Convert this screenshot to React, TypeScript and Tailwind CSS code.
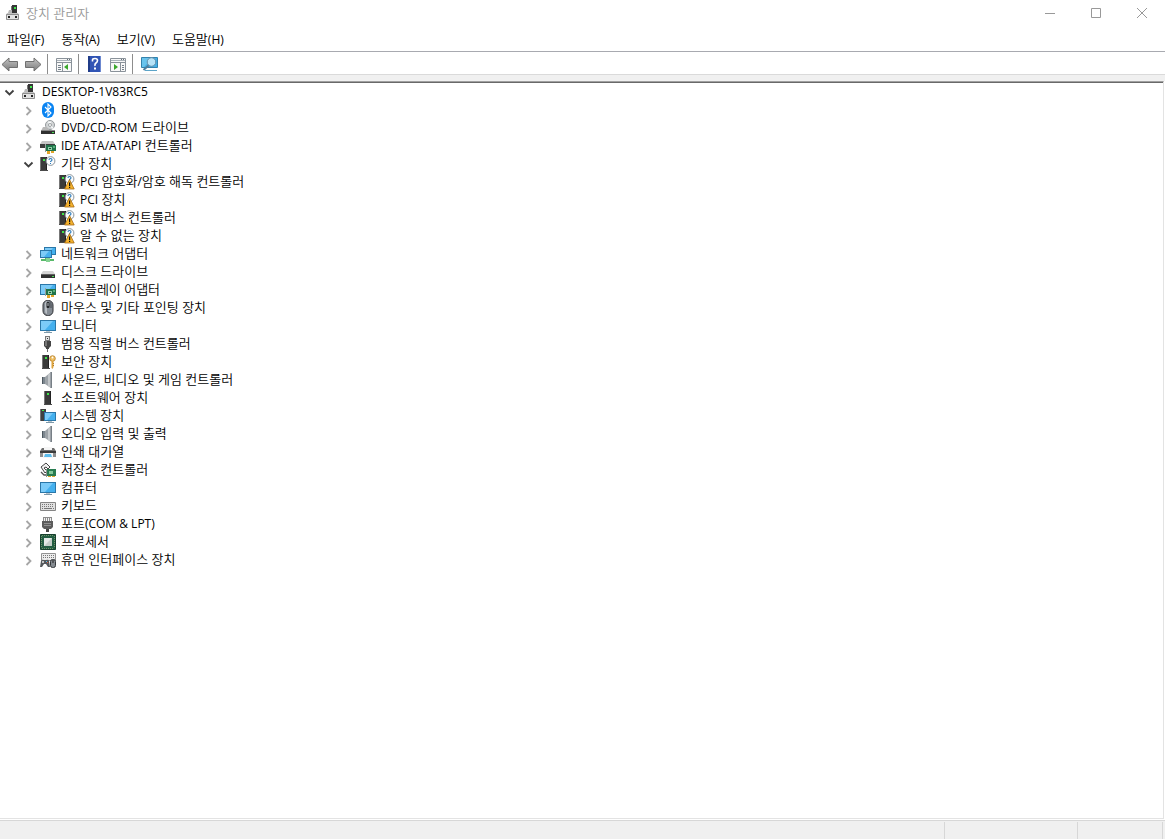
import { useState } from "react";
import type { ReactNode } from "react";

function Svg({ children }: { children: ReactNode }) {
  return (
    <svg viewBox="0 0 16 16" className="size-4 shrink-0" aria-hidden="true">
      {children}
    </svg>
  );
}

function Tower({ x = 0 }: { x?: number }) {
  return (
    <g transform={`translate(${x} 0)`}>
      <path d="M0 1h7v13H0z" fill="#3a3a3a" />
      <path d="M0 1h1v13H0z" fill="#777" />
      <path d="M6 1h1v13H6z" fill="#222" />
      <path d="M0 14h8v1H0z" fill="#4a4a4a" />
      <path d="M3 3h2v2H3z" fill="#3ee64a" />
    </g>
  );
}

function Screen({ x, y, w, h }: { x: number; y: number; w: number; h: number }) {
  return (
    <g>
      <rect x={x + 0.5} y={y + 0.5} width={w - 1} height={h - 1} fill="#45b0ee" stroke="#2b77a8" />
      <path d={`M${x + 1} ${y + 1}h${w - 4}l-${h - 3} ${h - 2}h-${w - h - 1}z`} fill="#7ccbf8" />
    </g>
  );
}

function Board() {
  return (
    <g>
      <path d="M5 6h1v8H5z" fill="#9aa09d" />
      <path d="M6 7h10v6H6z" fill="#20734a" />
      <path d="M8 9h4v3H8z" fill="#8fd0a8" />
      <path d="M9 10h2v1H9z" fill="#1d4d35" />
      <path d="M13 8h2v2h-2z" fill="#58b07c" />
      <path d="M7 13h3v3H7zM11 13h3v2h-3z" fill="#e2a52a" />
    </g>
  );
}

function Question({ cx, cy, r }: { cx: number; cy: number; r: number }) {
  return (
    <g>
      <circle cx={cx} cy={cy} r={r} fill="#fbfcfd" stroke="#7f8a92" strokeWidth="0.9" />
      <path
        d={`M${cx - 1.5} ${cy - 1}q0-1.500 1.500-1.500t1.500 1.300q0 .8-.8 1.200t-.7 1`}
        fill="none"
        stroke="#2879b9"
        strokeWidth="1.1"
      />
      <path d={`M${cx - 0.5} ${cy + 2}h1v1h-1z`} fill="#2879b9" />
    </g>
  );
}

const speaker = (
  <>
    <path d="M2 5h4v7H2z" fill="#7c868e" />
    <path d="M2 5h1v7H2z" fill="#4e5860" />
    <path d="M5 5l6-5v16l-6-4z" fill="#9da3a8" />
    <path d="M8 2.500L11 0v16l-3-2z" fill="#c3c7ca" />
    <path d="M10.500 0h1.500v16h-1.500z" fill="#777f86" />
  </>
);

const monitor = (
  <>
    <Screen x={0} y={2} w={16} h={11} />
    <path d="M6 13h4v1H6z" fill="#b8c4cc" />
    <path d="M4 14h8v1H4z" fill="#7e99aa" />
  </>
);

const icons: Record<string, ReactNode> = {
  root: (
    <>
      <path d="M6 1h1v7H6z" fill="#777" />
      <path d="M7 0h5v9H7z" fill="#353535" />
      <path d="M9 2h2v2H9z" fill="#3ee64a" />
      <path d="M4 5h3v3H3z" fill="#b9b9b9" />
      <path d="M2 8h11l1 2H1z" fill="#c4c4c4" />
      <path d="M1.500 9.500h12v5h-12z" fill="#e3e3e3" stroke="#8f8f8f" />
      <path d="M3 11h2v2H3zM10 11h2v2h-2z" fill="#222" />
    </>
  ),
  bluetooth: (
    <>
      <rect x="2" y="0" width="12" height="16" rx="6" fill="#0a84f2" />
      <path d="M5 5l6 6-3 3V2l3 3-6 6" fill="none" stroke="#fff" strokeWidth="1.1" />
    </>
  ),
  disc: (
    <>
      <circle cx="10" cy="5" r="4.500" fill="#d2d5d6" stroke="#8a9093" strokeWidth=".9" />
      <path d="M10 5L7.500 1.500h4zM10 5l4 3-2 1z" fill="#f8fafb" />
      <circle cx="10" cy="5" r="1.500" fill="#fff" stroke="#8a8f92" strokeWidth=".8" />
      <path d="M3 7h4l2 3h6v1H1z" fill="#b8b8b8" />
      <path d="M1 11h14v3H1z" fill="#303030" />
      <path d="M1 10h14v1H1z" fill="#868686" />
      <path d="M12 12h2v1h-2z" fill="#48dc52" />
    </>
  ),
  ide: (
    <>
      <path d="M2 3h11l2 3H0z" fill="#c6c6c6" />
      <path d="M0 6h15v4H0z" fill="#3c3c3c" />
      <Board />
    </>
  ),
  other: (
    <>
      <Tower />
      <Question cx={10.5} cy={5} r={4.4} />
    </>
  ),
  unknown: (
    <>
      <Tower />
      <Question cx={10.5} cy={5} r={4.4} />
      <path d="M10.500 5.500l4.700 9.500H5.600z" fill="#f5b22b" stroke="#a56b16" strokeWidth=".8" />
      <path d="M10 8.500h1.200v3.500H10zM10 12.800h1.200v1.200H10z" fill="#111" />
    </>
  ),
  network: (
    <>
      <Screen x={4} y={1} w={12} h={8} />
      <Screen x={0} y={4} w={12} h={8} />
      <path d="M5 12h5v1h4v2H1v-2h4z" fill="#58b96a" />
      <path d="M6 12h4v4H6z" fill="#85d293" />
    </>
  ),
  drive: (
    <>
      <path d="M3 7h10l2 3H1z" fill="#d5d5d5" />
      <path d="M1 10h14v4H1z" fill="#303030" />
      <path d="M1 10h14v1H1z" fill="#626262" />
      <path d="M12 12h2v1h-2z" fill="#48dc52" />
    </>
  ),
  display: (
    <>
      <Screen x={0} y={2} w={16} h={11} />
      <Board />
    </>
  ),
  mouse: (
    <>
      <rect x="3" y=".5" width="10" height="15" rx="4.500" fill="#858c94" stroke="#303236" />
      <path d="M5 2.500q.8-1.200 2-1.500v13q-2-.5-2-3z" fill="#b9bec3" />
      <path d="M10 1.500q2 .5 2 3.500v3h-2z" fill="#62686f" />
      <rect x="6.500" y="2" width="3" height="6" rx="1" fill="#25272a" />
      <path d="M7.500 3h1v3h-1z" fill="#b6bbc0" />
    </>
  ),
  monitor,
  usb: (
    <>
      <path d="M5 0h5v5H5z" fill="#787878" />
      <path d="M6 1h3v3H6z" fill="#e1e1e1" />
      <path d="M7 2h1v1H7z" fill="#333" />
      <path d="M4 5h7v5l-2 2v1H6v-1l-2-2z" fill="#454545" />
      <path d="M5 5h2v5H5z" fill="#777" />
      <path d="M7 13h1v3H7z" fill="#6e6e6e" />
    </>
  ),
  security: (
    <>
      <Tower x={2} />
      <circle cx="12.500" cy="4.500" r="2.800" fill="#f0c063" stroke="#b27b25" strokeWidth=".8" />
      <circle cx="12.500" cy="3.500" r=".9" fill="#fff" />
      <path d="M11.500 7h2v6l-1 2-1-1z" fill="#dda33b" />
      <path d="M13 9h1v1h-1zM13 11h1v1h-1z" fill="#b27b25" />
    </>
  ),
  speaker,
  software: <Tower x={4} />,
  system: (
    <>
      <path d="M0 1h6v12H0z" fill="#404040" />
      <path d="M0 1h1v12H0z" fill="#777" />
      <path d="M2 2h2v1H2z" fill="#3ee64a" />
      <Screen x={4} y={4} w={12} h={9} />
      <path d="M8 13h4v1H8z" fill="#b8c4cc" />
      <path d="M6 14h8v1H6z" fill="#7e99aa" />
    </>
  ),
  printer: (
    <>
      <path d="M2 4h12l2 3v6H0V7z" fill="#707070" />
      <path d="M4 3h8v3H4z" fill="#f5f5f5" />
      <path d="M0 7h16v2H0z" fill="#3b3b3b" />
      <path d="M0 9h3v4H0zM13 9h3v4h-3z" fill="#8e8e8e" />
      <path d="M3 9h10v5H3z" fill="#f5f5f5" />
      <path d="M5 10h6l1 3H4z" fill="#5cbcec" />
    </>
  ),
  storage: (
    <>
      <path d="M1 5l5-4 4 4-2 2-2-2-2 1 3 3-2 2z" fill="#f0f0f0" stroke="#444" strokeWidth="1" />
      <path d="M1 10l3 3h3" fill="none" stroke="#555" strokeWidth="1.300" />
      <path d="M7 7h9v7H7z" fill="#287c50" />
      <path d="M9 9h4v3H9z" fill="#85c89b" />
      <path d="M6 7h1v8H6z" fill="#8a8f8d" />
      <path d="M8 14h3v1H8zM12 14h3v1h-3z" fill="#e2a52a" />
    </>
  ),
  keyboard: (
    <>
      <path d="M.5 4.500h15v8H.5z" fill="#e0e0e0" stroke="#858585" />
      <path d="M2 6.500h12M2 8.500h12" stroke="#777" strokeDasharray="1 1" />
      <path d="M2 10.500h1M4 10.500h8M13 10.500h1" stroke="#777" />
    </>
  ),
  port: (
    <>
      <path d="M3 1h9v5H3z" fill="#8d8d8d" />
      <path d="M4 2h1v3H4zM6 2h1v3H6zM8 2h1v3H8zM10 2h1v3h-1z" fill="#f3f3f3" />
      <path d="M2 5h11v6l-2 2H4l-2-2z" fill="#5c5c5c" />
      <path d="M4 7h7v1H4zM4 9h7v1H4z" fill="#909090" />
      <path d="M6 13h3v3H6z" fill="#454545" />
    </>
  ),
  cpu: (
    <>
      <path d="M.5 .5h15v15H.5z" fill="#245e43" stroke="#17402e" />
      <path d="M2 1.500h12M2 14.500h12M1.500 2v12M14.500 2v12" stroke="#6f9468" strokeDasharray="1 1" />
      <path d="M4 4h8v8H4z" fill="#e4e9e7" />
      <path d="M4 12l8-8v8z" fill="#c3cdc8" />
    </>
  ),
  hid: (
    <>
      <path d="M1.500 1.500h14v7h-14z" fill="#ececec" stroke="#929292" />
      <path d="M3 3.500h11M3 5.500h11" stroke="#777" strokeDasharray="1 1" />
      <path d="M0 15l1-6q1-2 3-1h2q3-1 3 1l1 6H8l-2-3H4l-2 3z" fill="#55595d" />
      <path d="M2 10h2M3 9v2" stroke="#fff" strokeWidth=".8" />
      <path d="M6 9h1v1H6z" fill="#58c6f0" />
      <path d="M7 10h1v1H7z" fill="#e05e50" />
      <rect x="10.500" y="7.500" width="5" height="8" rx="2" fill="#858b91" stroke="#34383c" />
      <path d="M12.500 8v3h1V8z" fill="#222" />
    </>
  ),
};

type Device = { name: string; icon: string; children?: string[] };

const devices: Device[] = [
  { name: "Bluetooth", icon: "bluetooth" },
  { name: "DVD/CD-ROM 드라이브", icon: "disc" },
  { name: "IDE ATA/ATAPI 컨트롤러", icon: "ide" },
  {
    name: "기타 장치",
    icon: "other",
    children: ["PCI 암호화/암호 해독 컨트롤러", "PCI 장치", "SM 버스 컨트롤러", "알 수 없는 장치"],
  },
  { name: "네트워크 어댑터", icon: "network" },
  { name: "디스크 드라이브", icon: "drive" },
  { name: "디스플레이 어댑터", icon: "display" },
  { name: "마우스 및 기타 포인팅 장치", icon: "mouse" },
  { name: "모니터", icon: "monitor" },
  { name: "범용 직렬 버스 컨트롤러", icon: "usb" },
  { name: "보안 장치", icon: "security" },
  { name: "사운드, 비디오 및 게임 컨트롤러", icon: "speaker" },
  { name: "소프트웨어 장치", icon: "software" },
  { name: "시스템 장치", icon: "system" },
  { name: "오디오 입력 및 출력", icon: "speaker" },
  { name: "인쇄 대기열", icon: "printer" },
  { name: "저장소 컨트롤러", icon: "storage" },
  { name: "컴퓨터", icon: "monitor" },
  { name: "키보드", icon: "keyboard" },
  { name: "포트(COM & LPT)", icon: "port" },
  { name: "프로세서", icon: "cpu" },
  { name: "휴먼 인터페이스 장치", icon: "hid" },
];

/** Sets Latin runs one size below the Hangul around them. */
function Mixed({ text }: { text: string }) {
  return (
    <>
      {text.split(/([!-~]+(?: [!-~]+)*)/).map((run, i) =>
        i % 2 ? (
          <span key={i} className="text-xs leading-none font-normal">
            {run}
          </span>
        ) : (
          run
        ),
      )}
    </>
  );
}

function Toggle({ open, label, onClick }: { open: boolean; label: string; onClick?: () => void }) {
  return (
    <button type="button" aria-label={label} aria-expanded={open} onClick={onClick} className="h-4 w-3 shrink-0">
      <svg viewBox="0 0 12 16" className="h-4 w-3" fill="none" strokeWidth="1.8">
        {open ? <path d="M1.500 6.500l4 4 4-4" stroke="#404040" /> : <path d="M3.500 5l4 4-4 4" stroke="#a6a6a6" />}
      </svg>
    </button>
  );
}

function Label({ icon, text }: { icon: string; text: string }) {
  return (
    <>
      <Svg>{icons[icon]}</Svg>
      <span className="pb-0.5 pl-[5px] leading-4 whitespace-nowrap">
        <Mixed text={text} />
      </span>
    </>
  );
}

function Divider() {
  return <span className="h-5 w-px bg-[#8d8d8d]" />;
}

function Arrow({ back }: { back?: boolean }) {
  return (
    <svg viewBox="0 0 18 16" className="h-4 w-[18px]" aria-hidden="true">
      <defs>
        <linearGradient id={back ? "backFill" : "nextFill"} x1="0" y1="0" x2="0" y2="1">
          <stop offset="0" stopColor="#c4c4c4" />
          <stop offset="1" stopColor="#7c7c7c" />
        </linearGradient>
      </defs>
      {back ? (
        <path d="M1 8.500l7-6.500V5.500h8.500v6H8V15z" fill="url(#backFill)" stroke="#707070" />
      ) : (
        <path d="M17 8.500l-7-6.500V5.500H1.500v6H10V15z" fill="url(#nextFill)" stroke="#707070" />
      )}
    </svg>
  );
}

function Panel({ right }: { right?: boolean }) {
  return (
    <Svg>
      <path d="M.5 2.500h15v13H.5z" fill="#f8f8f8" stroke="#8a929a" />
      <path d="M1 4.500h14" stroke="#aab2b9" />
      <path d="M1 6.500h14" stroke="#8a929a" />
      <path d="M11 3h1v1h-1zM13 3h1v1h-1z" fill="#68717a" />
      {right ? (
        <>
          <path d="M10.500 7v8" stroke="#8a929a" />
          <path d="M12 9.500h2M12 11.500h2M12 13.500h2" stroke="#75818b" />
          <path d="M4 8l4 3-4 3z" fill="#3ba72b" />
        </>
      ) : (
        <>
          <path d="M6.500 7v8" stroke="#8a929a" />
          <path d="M2 9.500h3M2 11.500h3M2 13.500h3" stroke="#75818b" />
          <path d="M12 8l-4 3 4 3z" fill="#3ba72b" />
        </>
      )}
    </Svg>
  );
}

function CaptionButton({ label, path }: { label: string; path: string }) {
  return (
    <button type="button" aria-label={label} className="flex h-[26px] w-[46px] items-center justify-center">
      <svg viewBox="0 0 10 10" className="size-2.5" fill="none" stroke="currentColor">
        <path d={path} />
      </svg>
    </button>
  );
}

export default function App() {
  const [rootOpen, setRootOpen] = useState(true);
  const [open, setOpen] = useState<string[]>(["기타 장치"]);
  const toggle = (name: string) =>
    setOpen((list) => (list.includes(name) ? list.filter((n) => n !== name) : [...list, name]));

  return (
    <div className="flex min-h-screen flex-col bg-white font-['Open_Sans','Noto_Sans_CJK_KR',sans-serif] text-[13px] font-[350] text-black">
      <header className="flex h-[26px] items-center pl-[5px]">
        <Svg>{icons.root}</Svg>
        <h1 className="flex-1 pl-[5px] leading-5 text-[#999]">장치 관리자</h1>
        <div className="flex text-[#999]">
          <CaptionButton label="최소화" path="M0 5.500h10" />
          <CaptionButton label="최대화" path="M.5 .5h9v9h-9z" />
          <CaptionButton label="닫기" path="M0 0l10 10M10 0L0 10" />
        </div>
      </header>

      <nav className="flex h-[26px] items-center gap-[17px] border-b border-[#a8aab0] pl-[7px] leading-5">
        {["파일(F)", "동작(A)", "보기(V)", "도움말(H)"].map((item) => (
          <button key={item} type="button">
            <Mixed text={item} />
          </button>
        ))}
      </nav>

      <div role="toolbar" aria-label="도구 모음" className="flex h-[23px] items-center border-b border-[#dadada] pt-0.5 pl-px">
        <button type="button" aria-label="뒤로"><Arrow back /></button>
        <button type="button" aria-label="앞으로" className="px-[5px]"><Arrow /></button>
        <Divider />
        <button type="button" aria-label="콘솔 트리 표시/숨기기" className="pr-1.5 pl-2"><Panel /></button>
        <Divider />
        <button type="button" aria-label="도움말" className="pr-[7px] pl-2">
          <Svg>
            <path d="M1 0h13v16H1z" fill="#3155b5" />
            <path d="M1 0h2v16H1z" fill="#203c89" />
            <path d="M13 0h1v16h-1z" fill="#6c88d0" />
            <path d="M5.500 5.500V4q0-1.500 2.500-1.500T10.500 4.500Q10.500 6 9 7t-1 3" fill="none" stroke="#fff" strokeWidth="1.600" />
            <path d="M7 11.500h2v2H7z" fill="#fff" />
          </Svg>
        </button>
        <button type="button" aria-label="작업 창 표시/숨기기" className="pr-1.5"><Panel right /></button>
        <Divider />
        <button type="button" aria-label="하드웨어 변경 사항 검색" className="px-2">
          <svg viewBox="0 0 17 16" className="h-4 w-[17px]" aria-hidden="true">
            <path d="M.5 1.500h16v10H.5z" fill="#43afe7" stroke="#3482ad" />
            <path d="M1 2h10l-8 9H1z" fill="#69c4ed" />
            <path d="M4 14h12v1H4z" fill="#5ca4c8" />
            <path d="M8 9L2.500 14" stroke="#4f7f9e" strokeWidth="2" />
            <circle cx="10.500" cy="6" r="4.300" fill="#b6e3f8" stroke="#638da8" />
          </svg>
        </button>
      </div>

      <div className="h-1.5 bg-[#f0f0f0]" />

      <main className="mr-px flex-1 border-t border-r border-b border-t-[#a0a0a0] border-r-[#e3e3e3] border-b-[#e3e3e3]">
        <div className="border-t border-[#696969]">
          <ul role="tree" aria-label="장치">
            <li role="treeitem" aria-expanded={rootOpen}>
              <div className="flex h-[18px] items-center pl-1">
                <Toggle open={rootOpen} label="DESKTOP-1V83RC5" onClick={() => setRootOpen(!rootOpen)} />
                <span className="w-[5px]" />
                <Label icon="root" text="DESKTOP-1V83RC5" />
              </div>
              {rootOpen && (
                <ul role="group">
                  {devices.map((d) => (
                    <li key={d.name} role="treeitem" aria-expanded={open.includes(d.name)}>
                      <div className="flex h-[18px] items-center pl-[23px]">
                        <Toggle open={open.includes(d.name)} label={d.name} onClick={() => toggle(d.name)} />
                        <span className="w-[5px]" />
                        <Label icon={d.icon} text={d.name} />
                      </div>
                      {d.children && open.includes(d.name) && (
                        <ul role="group">
                          {d.children.map((name) => (
                            <li key={name} role="treeitem" className="flex h-[18px] items-center pl-[59px]">
                              <Label icon="unknown" text={name} />
                            </li>
                          ))}
                        </ul>
                      )}
                    </li>
                  ))}
                </ul>
              )}
            </li>
          </ul>
        </div>
      </main>

      <footer className="mt-px flex h-[19px] border-t border-[#d7d7d7] bg-[#f0f0f0] pt-px pr-0.5">
        <div className="flex-1 border-r border-[#d7d7d7]" />
        <div className="w-[133px] border-r border-[#d7d7d7]" />
        <div className="w-[85px] border-r border-[#d7d7d7]" />
      </footer>
    </div>
  );
}
